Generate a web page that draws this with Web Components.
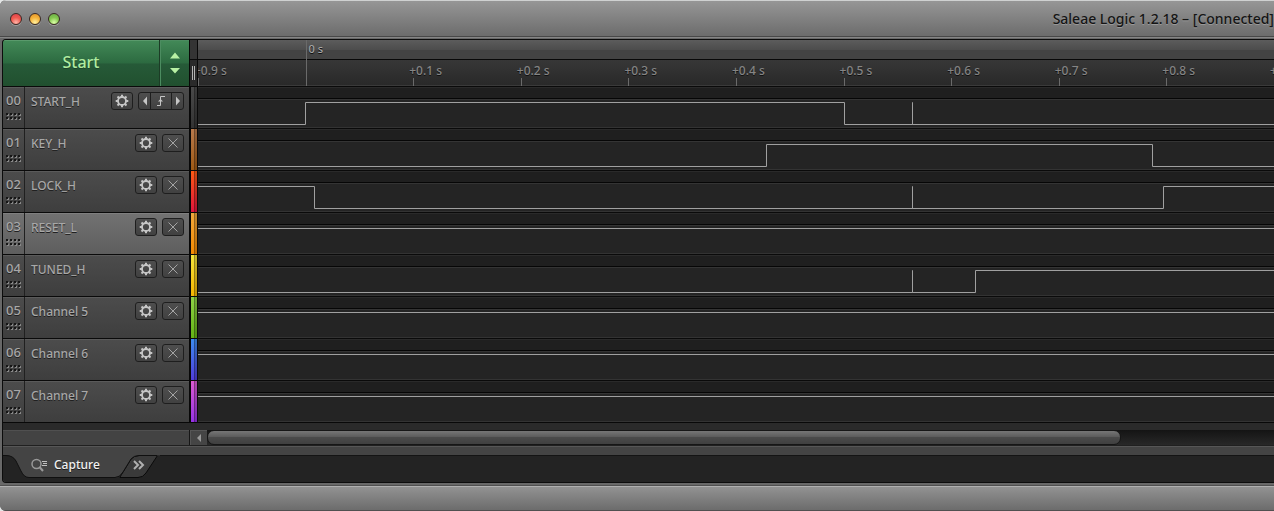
<!DOCTYPE html>
<html lang="en">
<head>
<meta charset="utf-8">
<title>Saleae Logic 1.2.18</title>
<style>
    body {
        margin: 0;
        background: #e4e6e6;
        font-family: 'Noto Sans', 'Open Sans', sans-serif;
        font-size: 13px;
        font-weight: 500;
        color: #a8a8a8;
    }
</style>
</head>
<body>
<logic-window>
    <title-bar slot="title">Saleae Logic 1.2.18 – [Connected]</title-bar>
    <time-ruler>
        <start-button slot="start">Start</start-button>
    </time-ruler>
    <logic-channel index="00" trigger light="#4a4a4a" dark="#333333" wave="M0 38.5H107.5V16.5H646.5V38.5H714.5V16.5V38.5H1076">START_H</logic-channel>
    <logic-channel index="01" light="#b97a4c" dark="#a05a14" wave="M0 38.5H568.5V16.5H954.5V38.5H1076">KEY_H</logic-channel>
    <logic-channel index="02" light="#ff5a14" dark="#e0143c" wave="M0 16.5H116.5V38.5H714.5V16.5V38.5H965.5V16.5H1076">LOCK_H</logic-channel>
    <logic-channel index="03" selected light="#f0a83c" dark="#f58a00" wave="M0 16.5H1076">RESET_L</logic-channel>
    <logic-channel index="04" light="#f5e63c" dark="#f5b400" wave="M0 38.5H714.5V16.5V38.5H777.5V16.5H1076">TUNED_H</logic-channel>
    <logic-channel index="05" light="#8fd246" dark="#64b414" wave="M0 16.5H1076">Channel 5</logic-channel>
    <logic-channel index="06" light="#3c8cf0" dark="#503cdc" wave="M0 16.5H1076">Channel 6</logic-channel>
    <logic-channel index="07" light="#dc5ad2" dark="#9632e6" wave="M0 16.5H1076">Channel 7</logic-channel>
    <scroll-strip slot="bottom"></scroll-strip>
    <tab-bar slot="bottom">Capture</tab-bar>
</logic-window>

<script>
class LogicWindow extends HTMLElement {
    constructor() {
        super();
        this.attachShadow({ mode: 'open' });
    }

    connectedCallback() {
        this.shadowRoot.innerHTML = /*html*/`
        <style>
            :host {
                display: flex;
                flex-direction: column;
                min-height: 100vh;
                border-radius: 6px 0 0 6px;
                background: #686868;
                overflow: hidden;
            }

            main {
                margin: 1px 0 0 2px;
                border: 1px solid #0c0c0c;
                border-right: 0;
                border-radius: 4px 0 0 4px;
                background: #2a2a2a;
                overflow: hidden;
            }

            .channels {
                border-bottom: 1px solid #080808;
                margin-bottom: 7px;
            }

            footer {
                flex: 1;
                min-height: 22px;
                margin-top: 3px;
                border-top: 1px solid #b0b0b0;
                border-bottom: 1px solid #505050;
                box-shadow: 0 -1px #505050;
                background: linear-gradient(#929292, #6c6c6c);
            }
        </style>
        <slot name="title"></slot>
        <main>
            <div class="channels"><slot></slot></div>
            <slot name="bottom"></slot>
        </main>
        <footer></footer>
        `;
    }
}

class TitleBar extends HTMLElement {
    constructor() {
        super();
        this.attachShadow({ mode: 'open' });
    }

    connectedCallback() {
        this.shadowRoot.innerHTML = /*html*/`
        <style>
            :host {
                display: flex;
                align-items: center;
                justify-content: space-between;
                box-sizing: border-box;
                height: 38px;
                padding-left: 10px;
                border-top: 1px solid #cfd1d1;
                border-bottom: 1px solid #858585;
                box-shadow: inset 0 -1px #484848;
                background: linear-gradient(#969696, #6b6b6b);
            }

            .lights {
                display: flex;
                gap: 7px;
            }

            button {
                width: 12px;
                height: 12px;
                padding: 0;
                border: 1px solid #3a2a24;
                border-radius: 50%;
                box-shadow: 0 1px #a0a0a0;
            }

            .close { background: radial-gradient(circle at 50% 85%, #ffb4a8, #f05a50 50%, #d8404c); }
            .minimise { background: radial-gradient(circle at 50% 85%, #fff0a0, #f5b43c 50%, #e09028); }
            .zoom { background: radial-gradient(circle at 50% 85%, #dcffa8, #84c850 50%, #68a846); }

            h1 {
                margin: 0;
                font-size: 14px;
                font-weight: 500;
                line-height: 20px;
                color: #141414;
                text-shadow: 0 1px #999999;
                white-space: nowrap;
            }
        </style>
        <div class="lights">
            <button class="close" aria-label="Close"></button>
            <button class="minimise" aria-label="Minimise"></button>
            <button class="zoom" aria-label="Zoom"></button>
        </div>
        <h1><slot></slot></h1>
        `;
    }
}

class StartButton extends HTMLElement {
    constructor() {
        super();
        this.attachShadow({ mode: 'open' });
    }

    connectedCallback() {
        this.shadowRoot.innerHTML = /*html*/`
        <style>
            :host {
                display: flex;
                height: 46px;
            }

            button {
                padding: 0;
                border: 0;
                font: inherit;
                font-size: 16px;
                color: #b0eca0;
                background: linear-gradient(#438a58, #2c6a40 50%, #265a38 52%, #21502f);
                box-shadow: inset 0 1px #5a9a6c;
            }

            .start {
                flex: 1;
                padding-bottom: 3px;
                text-shadow: 0 1px #1c4428;
            }

            .options {
                width: 30px;
                border-left: 1px solid #1c3c26;
                box-shadow: inset 1px 1px #4c8c60;
            }

            svg { display: block; margin: auto; }
        </style>
        <button class="start"><slot></slot></button>
        <button class="options" aria-label="Capture options">
            <svg width="12" height="24"><path d="M1 7.500L6 1.500L11 7.500ZM1 17L6 22.500L11 17Z" fill="#b8f0a4"/></svg>
        </button>
        `;
    }
}

class TimeRuler extends HTMLElement {
    constructor() {
        super();
        this.attachShadow({ mode: 'open' });
    }

    connectedCallback() {
        const labels = ['+0.9 s', '', '+0.1 s', '+0.2 s', '+0.3 s', '+0.4 s', '+0.5 s', '+0.6 s', '+0.7 s', '+0.8 s'];
        this.shadowRoot.innerHTML = /*html*/`
        <style>
            :host {
                display: flex;
                height: 46px;
            }

            .start { width: 186px; }

            .splitter {
                display: flex;
                flex-direction: column;
                width: 7px;
                border-left: 1px solid #080808;
                border-right: 1px solid #080808;
            }

            .splitter div:first-child {
                height: 19px;
                border-bottom: 1px solid #080808;
                background: #343434;
            }

            .grip {
                display: flex;
                flex: 1;
                align-items: center;
                justify-content: center;
                gap: 1px;
                background: #2a2a2a;
            }

            .grip i {
                width: 1px;
                height: 14px;
                background: #b4b4b4;
            }

            .scale {
                flex: 1;
                min-width: 0;
                overflow: hidden;
                font-size: 12px;
                line-height: 14px;
                color: #858585;
                text-shadow: 0 1px #111111;
                background: linear-gradient(#5c5c5c, #4c4c4c 10px, #434343 10px, #434343 19px, #080808 19px, #080808 20px, #373737 20px, #292929 45px, #3a3a3a 45px);
            }

            .ticks {
                display: flex;
                height: 46px;
            }

            .tick {
                flex: 1;
                min-width: 0;
                box-sizing: border-box;
                padding-top: 24px;
                background: linear-gradient(#6a6a6a, #6a6a6a) 0 100% / 1px 8px no-repeat;
                white-space: nowrap;
            }

            .tick span { margin-left: -4px; }

            .major {
                padding-top: 2px;
                font-size: 11px;
                color: #a8a8a8;
                background-size: 1px 100%;
            }

            .major span { margin-left: 3px; }

            .last { flex: 0 0 0px; }
        </style>
        <div class="start"><slot name="start"></slot></div>
        <div class="splitter"><div></div><div class="grip"><i></i><i></i></div></div>
        <div class="scale">
            <div class="ticks">
                ${labels.map(text => text
                    ? `<div class="tick"><span>${text}</span></div>`
                    : '<div class="tick major"><span>0 s</span></div>').join('')}
                <div class="tick last"><span>+0.9 s</span></div>
            </div>
        </div>
        `;
    }
}

class LogicChannel extends HTMLElement {
    constructor() {
        super();
        this.attachShadow({ mode: 'open' });
    }

    get controls() {
        const gear = /*html*/`
            <button aria-label="Channel settings">
                <svg width="14" height="14" viewBox="-7 -7 14 14" fill="none" stroke="#c6c6c6">
                    <circle r="4" stroke-width="1.8"/>
                    <path stroke-width="2" d="M0 -4V-6.300M0 4V6.300M-4 0H-6.300M4 0H6.300M-3 -3L-4.500 -4.500M3 3L4.500 4.500M-3 3L-4.500 4.500M3 -3L4.500 -4.500"/>
                </svg>
            </button>`;
        if (this.hasAttribute('trigger')) {
            return gear + /*html*/`
            <div class="group">
                <button aria-label="Previous edge"><svg width="6" height="10"><path d="M5 0.500V9.500L1 5Z" fill="#c6c6c6"/></svg></button>
                <button class="edge" aria-label="Rising edge trigger"><svg width="10" height="12" fill="none" stroke="#c6c6c6"><path d="M1 10.500H4.500V1.500H9"/><path d="M2 6.500L4.500 4L7 6.500Z" fill="#c6c6c6" stroke="none"/></svg></button>
                <button aria-label="Next edge"><svg width="6" height="10"><path d="M1 0.500V9.500L5 5Z" fill="#c6c6c6"/></svg></button>
            </div>`;
        }
        return gear + /*html*/`
            <button aria-label="Clear trigger"><svg width="10" height="10" stroke="#a4a4a4"><path d="M0.500 0.500L9.500 9.500M9.500 0.500L0.500 9.500"/></svg></button>`;
    }

    get dots() {
        let dots = '';
        for (const y of [0, 4]) {
            for (const x of [0, 4, 8, 12]) {
                dots += `<rect x="${x + 1}" y="${y + 1}" width="2" height="2" fill="#888888"/><rect x="${x}" y="${y}" width="2" height="2" fill="#161616"/>`;
            }
        }
        return dots;
    }

    connectedCallback() {
        this.shadowRoot.innerHTML = /*html*/`
        <style>
            :host {
                display: flex;
                box-sizing: border-box;
                height: 42px;
                border-top: 1px solid #0a0a0a;
            }

            .index, .panel {
                box-sizing: border-box;
                background: linear-gradient(#4c4c4c, #3e3e3e);
                box-shadow: inset 0 1px #5a5a5a;
                text-shadow: 0 1px #202020;
            }

            :host([selected]) .index, :host([selected]) .panel {
                background: linear-gradient(#727272, #5e5e5e);
                box-shadow: inset 0 1px #808080;
            }

            .index {
                display: flex;
                flex-direction: column;
                align-items: center;
                gap: 4px;
                width: 22px;
                padding-top: 4px;
                border-right: 1px solid #202020;
                line-height: 18px;
            }

            .index svg { display: block; }

            .panel {
                display: flex;
                align-items: flex-start;
                gap: 5px;
                width: 164px;
                padding: 5px 5px 0 6px;
                font-size: 12px;
                line-height: 20px;
            }

            .name { flex: 1; white-space: nowrap; }

            button {
                display: flex;
                align-items: center;
                justify-content: center;
                box-sizing: border-box;
                width: 22px;
                height: 18px;
                padding: 0;
                border: 1px solid #1e1e1e;
                border-radius: 3px;
                background: linear-gradient(#4e4e4e, #414141);
            }

            .group { display: flex; }

            .group button {
                width: 13px;
                border-radius: 3px 0 0 3px;
            }

            .group .edge {
                width: 22px;
                margin: 0 -1px;
                border-radius: 0;
            }

            .group button:last-child { border-radius: 0 3px 3px 0; }

            .strip {
                box-sizing: border-box;
                width: 9px;
                border: solid #080808;
                border-width: 0 1px 0 2px;
                background:
                    linear-gradient(90deg, transparent 3px, #0006 3px, #0006 4px, #0003 4px),
                    linear-gradient(${this.getAttribute('light')}, ${this.getAttribute('dark')});
            }

            .wave {
                flex: 1;
                min-width: 0;
                width: 0;
                height: 41px;
                background: linear-gradient(#2a2a2a 1px, #1f1f1f 1px, #1f1f1f 11px, #060606 11px, #060606 12px, #343434 12px, #343434 13px, #242424 13px, #242424 40px, #333333 40px);
            }
        </style>
        <div class="index">
            <span>${this.getAttribute('index')}</span>
            <svg width="15" height="7">${this.dots}</svg>
        </div>
        <div class="panel">
            <span class="name"><slot></slot></span>
            ${this.controls}
        </div>
        <div class="strip"></div>
        <svg class="wave" viewBox="0 1 1076 41" preserveAspectRatio="none">
            <path d="${this.getAttribute('wave')}" fill="none" stroke="#a0a0a0" vector-effect="non-scaling-stroke"/>
        </svg>
        `;
    }
}

class ScrollStrip extends HTMLElement {
    constructor() {
        super();
        this.attachShadow({ mode: 'open' });
    }

    connectedCallback() {
        this.shadowRoot.innerHTML = /*html*/`
        <style>
            :host {
                display: flex;
                height: 15px;
                border-bottom: 1px solid #202020;
            }

            .side {
                width: 186px;
                border-right: 1px solid #161616;
                background: #434343;
                box-shadow: inset 0 1px #505050;
            }

            button {
                display: flex;
                align-items: center;
                justify-content: center;
                width: 17px;
                padding: 0;
                border: 0;
                background: #454545;
                box-shadow: inset 1px 1px #565656;
            }

            .track {
                flex: 1;
                background: linear-gradient(#141414, #282828);
            }

            .thumb {
                box-sizing: border-box;
                width: 85.7%;
                height: 15px;
                border: 1px solid #161616;
                border-radius: 7px;
                background: linear-gradient(#767676, #585858 50%, #4a4a4a 50%, #404040);
            }
        </style>
        <div class="side"></div>
        <button aria-label="Scroll left"><svg width="6" height="8"><path d="M5 0V8L1 4Z" fill="#999999"/></svg></button>
        <div class="track"><div class="thumb"></div></div>
        `;
    }
}

class TabBar extends HTMLElement {
    constructor() {
        super();
        this.attachShadow({ mode: 'open' });
    }

    connectedCallback() {
        this.shadowRoot.innerHTML = /*html*/`
        <style>
            :host {
                display: block;
                position: relative;
                padding-top: 9px;
                background: #444444;
                box-shadow: inset 0 1px #565656;
            }

            .bar {
                display: flex;
                align-items: flex-start;
                box-sizing: border-box;
                height: 27px;
                border-top: 1px solid #141414;
                background: #232323;
            }

            .shape {
                position: absolute;
                left: 0;
                top: 8px;
            }

            button {
                position: relative;
                display: flex;
                align-items: center;
                gap: 6px;
                height: 18px;
                padding: 0;
                border: 0;
                background: none;
                font: inherit;
                font-size: 12px;
                line-height: 18px;
                color: #f2f2f2;
                text-shadow: 0 1px #1a1a1a;
            }

            .capture { margin-left: 27px; }
            .more { margin-left: 33px; }
        </style>
        <div class="bar">
            <svg class="shape" width="160" height="25">
                <path d="M117 23L128 5Q131 1.500 136 1.500H154.500L143 19Q140 23.500 135 23.500H117Z" fill="#3a3a3a" stroke="#0a0a0a"/>
                <path d="M0 1.500H3Q10 1.500 13 7L18 17Q21 23.500 26 23.500H112Q117 23.500 120 18L128 5Q131 1.500 136 1.500H157V0H0Z" fill="#444444"/>
                <path d="M0 1.500H3Q10 1.500 13 7L18 17Q21 23.500 26 23.500H112Q117 23.500 120 18L128 5Q131 1.500 136 1.500H154" fill="none" stroke="#101010"/>
            </svg>
            <button class="capture">
                <svg width="18" height="16" fill="none" stroke="#999999">
                    <circle cx="6.500" cy="7" r="4.500" stroke-width="1.500"/>
                    <path d="M9.500 10L13 14" stroke-width="2"/>
                    <path d="M12 4.500H17M13 6.500H17M12 8.500H17" stroke="#c0c0c0"/>
                </svg>
                <slot></slot>
            </button>
            <button class="more" aria-label="More tabs">
                <svg width="12" height="10" fill="none" stroke="#b0b0b0" stroke-width="2"><path d="M1 1L5 5L1 9M6 1L10 5L6 9"/></svg>
            </button>
        </div>
        `;
    }
}

customElements.define('logic-window', LogicWindow);
customElements.define('title-bar', TitleBar);
customElements.define('start-button', StartButton);
customElements.define('time-ruler', TimeRuler);
customElements.define('logic-channel', LogicChannel);
customElements.define('scroll-strip', ScrollStrip);
customElements.define('tab-bar', TabBar);
</script>
</body>
</html>
